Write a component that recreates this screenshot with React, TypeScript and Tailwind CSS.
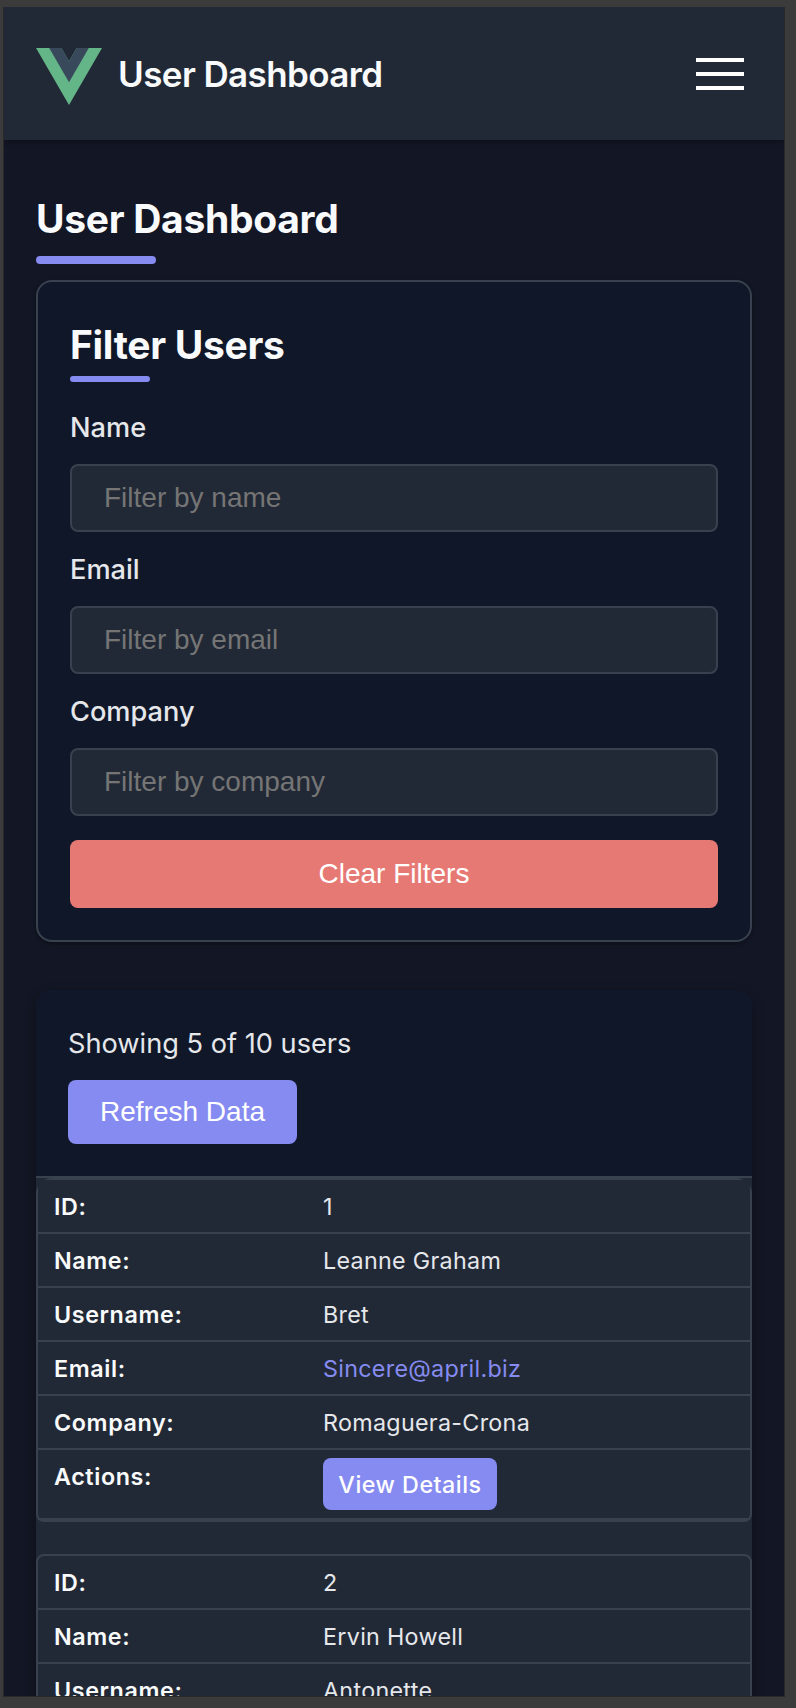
import type { ReactNode } from "react";

type User = { id: number; name: string; username: string; email: string; company: string };

const users: User[] = [
  { id: 1, name: "Leanne Graham", username: "Bret", email: "Sincere@april.biz", company: "Romaguera-Crona" },
  { id: 2, name: "Ervin Howell", username: "Antonette", email: "Shanna@melissa.tv", company: "Deckow-Crist" },
];

function VueLogo() {
  return (
    <svg className="mt-1.5 h-[57px] w-[66px]" viewBox="0 0 261.76 226.69" preserveAspectRatio="none">
      <path fill="#64b587" d="M161.096.001l-30.225 52.351L100.647.001H-.005l130.877 226.688L261.749.001z" />
      <path fill="#39495c" d="M161.096.001l-30.225 52.351L100.647.001H52.346l78.526 136.01L209.398.001z" />
    </svg>
  );
}

function Field({ label, placeholder }: { label: string; placeholder: string }) {
  return (
    <label className="flex flex-col gap-4">
      <span className="pt-px text-[27.2px] leading-[41px] font-medium text-[#e5e7eb]">{label}</span>
      <input
        className="h-[68px] w-full rounded-lg border-2 border-[#38424f] bg-[#222936] px-8 font-['Liberation_Sans',Arial,sans-serif] text-[28px] text-[#e5e7eb] placeholder:text-[#757575]"
        placeholder={placeholder}
      />
    </label>
  );
}

function Row({ label, children }: { label: string; children: ReactNode }) {
  return (
    <div className="flex items-start border-b-2 border-[#38424f] px-4 py-2">
      <div className="w-[269px] shrink-0 pt-px font-semibold tracking-[0.6px] text-[#f9fafb]">{label}:</div>
      {children}
    </div>
  );
}

function UserCard({ user }: { user: User }) {
  return (
    <div className="rounded-lg border-2 border-[#38424f] bg-[#222936] text-[23.3px] leading-[35px] tracking-[0.3px] text-[#e5e7eb]">
      <Row label="ID">
        <span className="pt-px">{user.id}</span>
      </Row>
      <Row label="Name">
        <span className="pt-px">{user.name}</span>
      </Row>
      <Row label="Username">
        <span className="pt-px">{user.username}</span>
      </Row>
      <Row label="Email">
        <span className="pt-px text-[#858bf0]">{user.email}</span>
      </Row>
      <Row label="Company">
        <span className="pt-px">{user.company}</span>
      </Row>
      <Row label="Actions">
        <button className="flex h-[52px] w-[174px] items-center justify-center rounded-lg bg-[#858bf0] pt-px font-medium tracking-[0.5px] whitespace-nowrap text-white">
          View Details
        </button>
      </Row>
    </div>
  );
}

export default function App() {
  return (
    <div className="h-[1708px] w-[796px] overflow-hidden bg-[#3b3b3b] pt-[7px] pl-[3px] font-[Inter,'Liberation_Sans',sans-serif]">
      <div className="h-[1690px] w-[782px] overflow-hidden border-x border-b border-[#29292c] bg-[#131624]">
        <header className="flex h-[133px] items-center bg-[#222936] pr-10 pl-8 shadow-[0_2px_6px_rgba(0,0,0,0.3)]">
          <VueLogo />
          <span className="ml-4 pt-px text-[35px] leading-[54px] font-semibold tracking-[-0.6px] whitespace-nowrap text-[#f9fafb]">
            User Dashboard
          </span>
          <button className="ml-auto flex w-12 flex-col gap-2.5">
            <span className="h-1 w-full bg-white" />
            <span className="h-1 w-full bg-white" />
            <span className="h-1 w-full bg-white" />
          </button>
        </header>

        <main className="px-8 pt-[50px]">
          <h1 className="text-[39px] leading-[57px] font-bold tracking-[-0.3px] whitespace-nowrap text-[#f9fafb]">User Dashboard</h1>
          <div className="mt-[9px] h-2 w-[120px] rounded-full bg-[#858bf0]" />

          <section className="mt-4 rounded-2xl border-2 border-[#38424f] bg-[#101728] p-8 shadow-[0_2px_4px_rgba(0,0,0,0.3)]">
            <h2 className="text-[39px] leading-[61px] font-bold tracking-[-0.3px] text-[#f9fafb]">Filter Users</h2>
            <div className="mt-px h-1.5 w-20 rounded-full bg-[#858bf0]" />
            <div className="mt-6 flex flex-col gap-4">
              <Field label="Name" placeholder="Filter by name" />
              <Field label="Email" placeholder="Filter by email" />
              <Field label="Company" placeholder="Filter by company" />
            </div>
            <button className="mt-6 h-[68px] w-full rounded-lg bg-[#e77975] font-['Liberation_Sans',Arial,sans-serif] text-[28px] text-white">
              Clear Filters
            </button>
          </section>

          <section className="mt-12 overflow-clip rounded-2xl bg-[#222936] shadow-[0_4px_12px_rgba(0,0,0,0.3)]">
            <div className="border-b-2 border-[#38424f] bg-[#101728] p-8">
              <p className="pt-px text-[27.2px] leading-[41px] text-[#e5e7eb]">Showing 5 of 10 users</p>
              <button className="mt-4 h-16 w-[229px] rounded-lg bg-[#858bf0] font-['Liberation_Sans',Arial,sans-serif] text-[28px] text-white">
                Refresh Data
              </button>
            </div>
            <div className="flex flex-col gap-8 overflow-clip rounded-2xl">
              {users.map((user) => (
                <UserCard key={user.id} user={user} />
              ))}
            </div>
          </section>
        </main>
      </div>
    </div>
  );
}
